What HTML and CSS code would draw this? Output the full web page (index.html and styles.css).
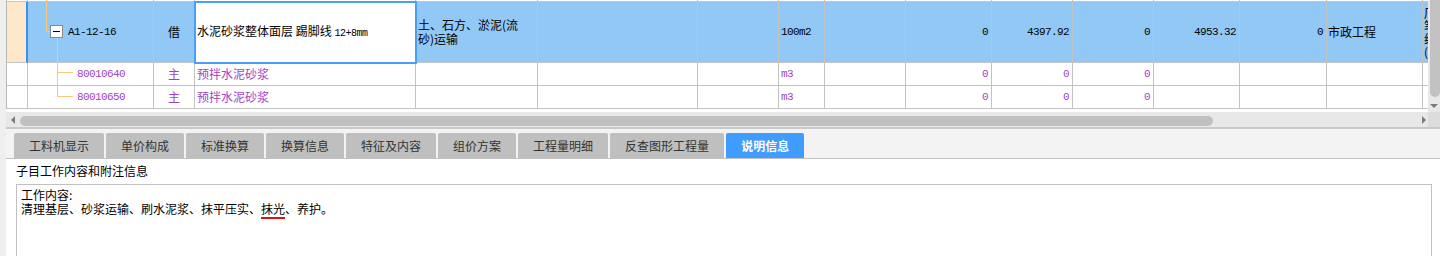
FILE: index.html
```html
<!DOCTYPE html>
<html lang="zh">
<head>
<meta charset="utf-8">
<title>说明信息</title>
<link rel="stylesheet" href="styles.css">
</head>
<body>
<div class="app">
  <div class="strip"></div>
  <div class="main">
    <div class="grid-area">
      <div class="table-view">
        <div class="row row-above">
          <div class="cell"></div><div class="cell"></div><div class="cell"></div><div class="cell"></div>
          <div class="cell"></div><div class="cell"></div><div class="cell"></div><div class="cell"></div>
          <div class="cell"></div><div class="cell"></div><div class="cell"></div><div class="cell"></div>
          <div class="cell"></div><div class="cell"></div><div class="cell"></div><div class="cell"></div>
        </div>
        <div class="row row-sel">
          <div class="cell c0"></div>
          <div class="cell code-top"><span class="n">A1-12-16</span></div>
          <div class="cell center">借</div>
          <div class="cell sel-cell"><span class="line">水泥砂浆整体面层 踢脚线 <span class="n small">12+8mm</span></span></div>
          <div class="cell wrap"><span>土、石方、淤泥(流<br>砂)运输</span></div>
          <div class="cell"></div>
          <div class="cell"></div>
          <div class="cell"><span class="n">100m2</span></div>
          <div class="cell"></div>
          <div class="cell right"><span class="n">0</span></div>
          <div class="cell right"><span class="n">4397.92</span></div>
          <div class="cell right"><span class="n">0</span></div>
          <div class="cell right"><span class="n">4953.32</span></div>
          <div class="cell right"><span class="n">0</span></div>
          <div class="cell tight">市政工程</div>
          <div class="cell cut"><span class="vtext">厂笔线(</span></div>
        </div>
        <div class="row row-sub">
          <div class="cell"></div>
          <div class="cell code-sub"><span class="n pur">80010640</span></div>
          <div class="cell center pur">主</div>
          <div class="cell pur">预拌水泥砂浆</div>
          <div class="cell"></div>
          <div class="cell"></div>
          <div class="cell"></div>
          <div class="cell"><span class="n pur">m3</span></div>
          <div class="cell"></div>
          <div class="cell right"><span class="n pur">0</span></div>
          <div class="cell right"><span class="n pur">0</span></div>
          <div class="cell right"><span class="n pur">0</span></div>
          <div class="cell"></div>
          <div class="cell"></div>
          <div class="cell"></div>
          <div class="cell"></div>
        </div>
        <div class="row row-sub">
          <div class="cell"></div>
          <div class="cell code-sub"><span class="n pur">80010650</span></div>
          <div class="cell center pur">主</div>
          <div class="cell pur">预拌水泥砂浆</div>
          <div class="cell"></div>
          <div class="cell"></div>
          <div class="cell"></div>
          <div class="cell"><span class="n pur">m3</span></div>
          <div class="cell"></div>
          <div class="cell right"><span class="n pur">0</span></div>
          <div class="cell right"><span class="n pur">0</span></div>
          <div class="cell right"><span class="n pur">0</span></div>
          <div class="cell"></div>
          <div class="cell"></div>
          <div class="cell"></div>
          <div class="cell"></div>
        </div>
        <svg class="tree" width="80" height="112" viewBox="0 0 80 112">
          <g stroke="#fbc77c" stroke-width="1" fill="none">
            <path d="M40.5 0 V31.5 H44.5"/>
            <path d="M51.5 38 V96.5 H67"/>
            <path d="M51.5 72.5 H67"/>
          </g>
          <rect x="44.5" y="25.5" width="12" height="12" fill="#fff" stroke="#8a8a8a"/>
          <path d="M47 31.5 H54" stroke="#000" stroke-width="1"/>
        </svg>
      </div>
      <div class="vscroll">
        <div class="vthumb"></div>
        <div class="arrow-down"></div>
      </div>
      <div class="hscroll">
        <div class="arrow-left"></div>
        <div class="hthumb"></div>
        <div class="arrow-right"></div>
      </div>
      <div class="corner"></div>
    </div>
    <div class="tabbar">
      <div class="tab">工料机显示</div>
      <div class="tab">单价构成</div>
      <div class="tab">标准换算</div>
      <div class="tab">换算信息</div>
      <div class="tab">特征及内容</div>
      <div class="tab">组价方案</div>
      <div class="tab">工程量明细</div>
      <div class="tab">反查图形工程量</div>
      <div class="tab active">说明信息</div>
    </div>
    <div class="panel">
      <div class="panel-title">子目工作内容和附注信息</div>
      <div class="memo">
        <div>工作内容:</div>
        <div>清理基层、砂浆运输、刷水泥浆、抹平压实、<span class="spell">抹光</span>、养护。</div>
      </div>
    </div>
  </div>
</div>
</body>
</html>
```

FILE: styles.css
```css
* { box-sizing: border-box; }
html, body {
  margin: 0;
  padding: 0;
  width: 1440px;
  height: 256px;
  overflow: hidden;
  background: #ffffff;
  font-family: "Noto Sans CJK SC", "Noto Sans", sans-serif;
  font-size: 12px;
  color: #000;
}
.app {
  display: flex;
  height: 256px;
}
.strip {
  width: 6px;
  flex: none;
  background: #efefef;
}
.main {
  flex: 1;
  display: flex;
  flex-direction: column;
  min-width: 0;
}
.grid-area {
  display: grid;
  grid-template-columns: 1422px 12px;
  grid-template-rows: 112px 15px;
  border-bottom: 2px solid #c9c9c9;
}
.table-view {
  position: relative;
  overflow: hidden;
  background: #fff;
}
.row {
  display: grid;
  grid-template-columns: 21px 126px 41px 221px 122px 160px 81px 46px 81px 86px 81px 81px 86px 87px 96px 80px;
  border-left: 1px solid #b8b8b8;
  width: 1500px;
}
.cell {
  border-right: 1px solid #c3c3c3;
  border-bottom: 1px solid #c3c3c3;
  display: flex;
  align-items: center;
  padding: 0 2px;
  overflow: hidden;
  white-space: nowrap;
  line-height: 14px;
}
.row-above { height: 2px; }
.row-sel { height: 61px; background: #92c8f6; }
.row-sub { height: 23px; background: #fff; }
.row-sel .c0 {
  background: #fde8ca;
  border-right: 2px solid #3e8ef0;
}
.center { justify-content: center; }
.right { justify-content: flex-end; padding-right: 3px; }
.tight { padding-left: 1px; }
.wrap { white-space: normal; }
.code-top { padding-left: 40px; }
.code-sub { padding-left: 49px; }
.sel-cell {
  background: #fff;
  outline: 2px solid #4c9df5;
  outline-offset: -1px;
  position: relative;
  z-index: 1;
}
.line { white-space: pre; }
.cut { padding-left: 1px; }
.vtext {
  display: block;
  width: 13px;
  white-space: normal;
  word-break: break-all;
  line-height: 13px;
}
.n {
  font-family: "Liberation Mono", "DejaVu Sans Mono", monospace;
  font-size: 11px;
  letter-spacing: -0.6px;
}
.n.small { font-size: 10px; letter-spacing: -0.5px; }
.pur { color: #a23fc6; }
.tree {
  position: absolute;
  left: 0;
  top: 0;
  pointer-events: none;
  z-index: 2;
}
.vscroll {
  grid-row: 1;
  grid-column: 2;
  background: #e8e8e8;
  display: flex;
  flex-direction: column;
  align-items: flex-end;
}
.vthumb {
  width: 10px;
  height: 97px;
  background: #c2c2c2;
  border-radius: 0 0 5px 5px;
}
.arrow-down {
  margin: 7px 2px 0 0;
  width: 0;
  height: 0;
  border-left: 4px solid transparent;
  border-right: 4px solid transparent;
  border-top: 4px solid #7c7c7c;
}
.hscroll {
  grid-row: 2;
  grid-column: 1;
  background: #e8e8e8;
  display: flex;
  align-items: center;
  padding-left: 5px;
}
.arrow-left {
  width: 0;
  height: 0;
  border-top: 4px solid transparent;
  border-bottom: 4px solid transparent;
  border-right: 4px solid #7c7c7c;
  flex: none;
}
.hthumb {
  margin-left: 5px;
  width: 1193px;
  height: 10px;
  background: #c0c0c0;
  border-radius: 5px;
  flex: none;
  margin-top: 2px;
}
.arrow-right {
  margin-left: auto;
  margin-right: 2px;
  width: 0;
  height: 0;
  border-top: 4px solid transparent;
  border-bottom: 4px solid transparent;
  border-left: 4px solid #7c7c7c;
}
.corner {
  grid-row: 2;
  grid-column: 2;
  background: #dcdcdc;
}
.tabbar {
  display: flex;
  gap: 2px;
  height: 30px;
  padding: 4px 0 0 8px;
  background: #f3f3f3;
  border-bottom: 1px solid #c0c0c0;
}
.tab {
  height: 25px;
  padding: 0 15px;
  background: #bfbfbf;
  color: #333;
  line-height: 25px;
  font-size: 12px;
  border-radius: 2px 2px 0 0;
}
.tab.active {
  background: #409cff;
  color: #fff;
  font-weight: bold;
}
.panel {
  flex: 1;
  background: #fff;
  padding: 4px 8px 0 10px;
}
.panel-title {
  line-height: 16px;
  height: 16px;
  font-size: 12px;
}
.memo {
  margin-top: 5px;
  border: 1px solid #c0c0c0;
  height: 120px;
  padding: 3px 4px;
  line-height: 14px;
  font-size: 12px;
}
.spell {
  text-decoration: underline solid #e01010 2px;
  text-underline-offset: 3px;
}
```
